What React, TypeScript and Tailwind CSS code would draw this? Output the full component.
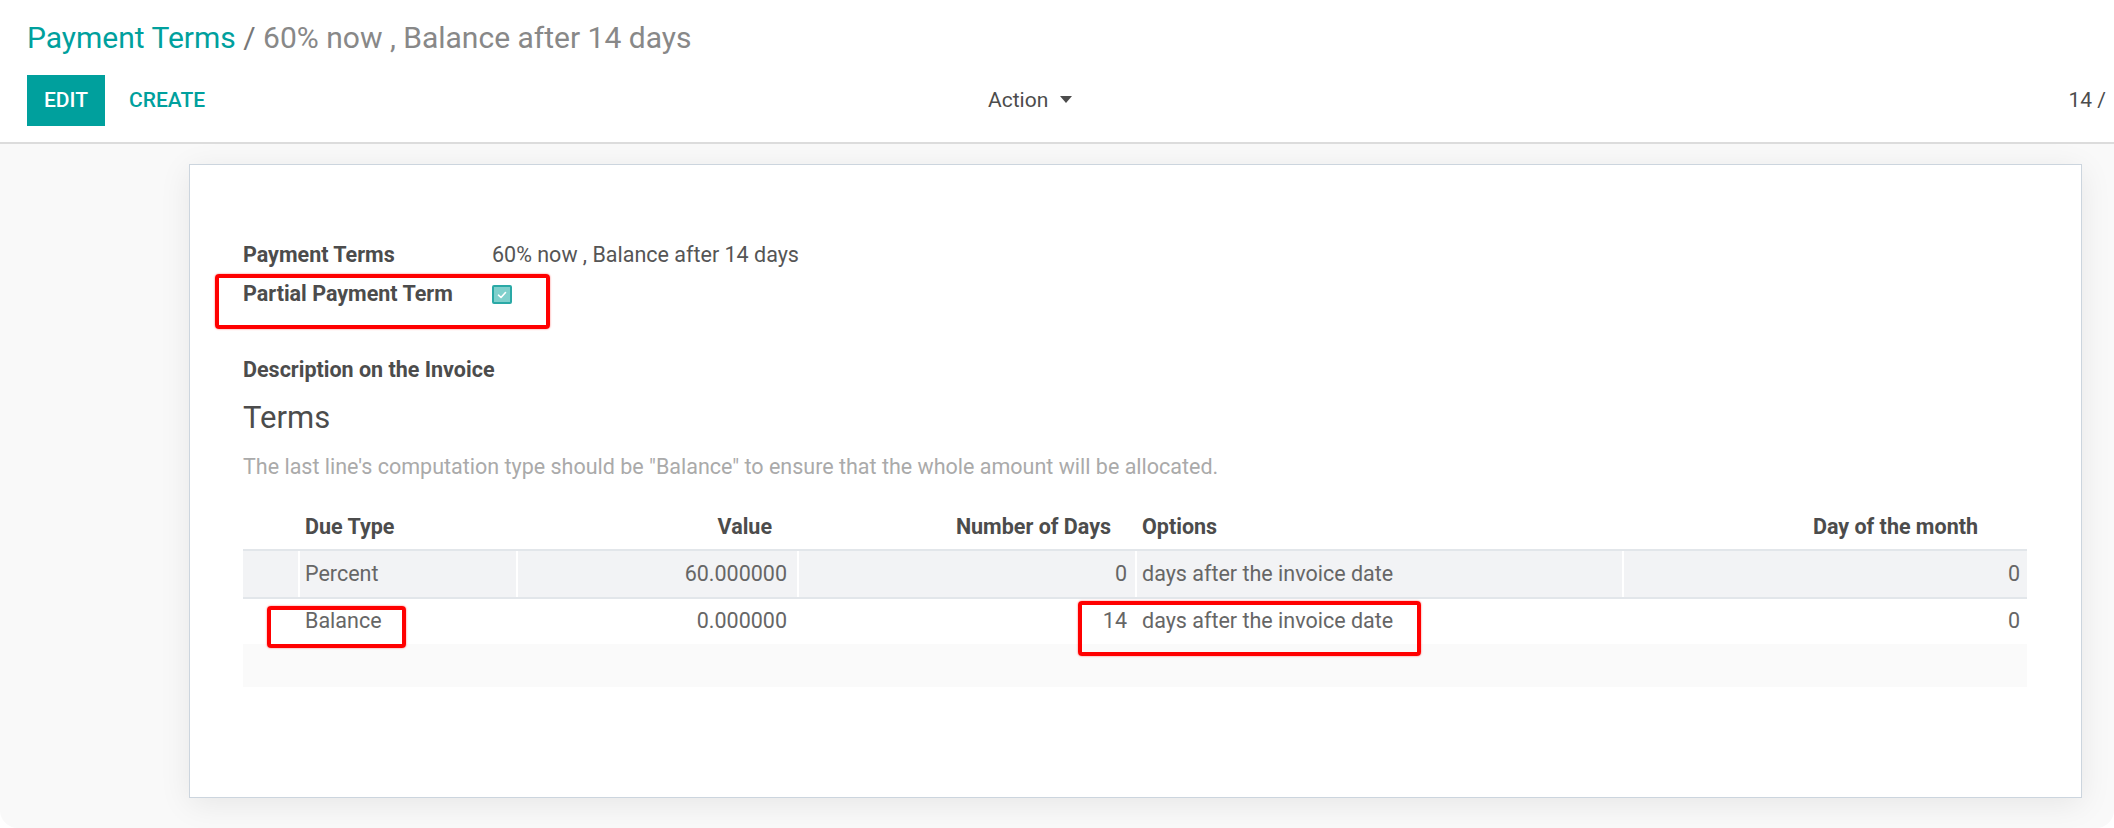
import React from "react";

const cols = "grid grid-cols-[55px_218px_281px_338px_487px_405px]";

function Check() {
  return (
    <div className="w-[20px] h-[19px] rounded-[2px] border-2 border-[#2aa9a6] bg-[#7fd0cc] flex items-center justify-center">
      <svg width="10" height="8" viewBox="0 0 10 8" fill="none">
        <path d="M1.5 4.2 L4 6.5 L8.5 1.5" stroke="white" strokeWidth="1.6" strokeLinecap="round" strokeLinejoin="round" />
      </svg>
    </div>
  );
}

function RedBox({ className }: { className: string }) {
  return (
    <div
      className={
        "absolute border-[4px] border-[#ff0000] rounded-[4px] shadow-[0_0_2px_rgba(255,0,0,0.6)] pointer-events-none " +
        className
      }
    />
  );
}

export default function App() {
  return (
    <div className="w-[2114px] h-[828px] bg-white overflow-hidden font-['Roboto',sans-serif]">
      <div className="h-[828px] rounded-b-[18px] bg-[#f9f9f9] overflow-hidden flex flex-col">
        {/* Control panel */}
        <div className="h-[144px] bg-white border-b-2 border-[#dcdcdc] pl-[27px] shrink-0">
          <div className="pt-[18px] text-[30px] leading-[40px] whitespace-nowrap">
            <span className="text-[#00a09d]">Payment Terms</span>
            <span className="text-[#777777]"> / </span>
            <span className="text-[#888888]">60% now , Balance after 14 days</span>
          </div>
          <div className="mt-[17px] h-[51px] flex items-center">
            <div className="w-[961px] flex items-center">
              <div className="w-[78px] h-[51px] bg-[#00a09d] text-white font-medium text-[21px] flex items-center justify-center">
                EDIT
              </div>
              <div className="ml-[24px] text-[#00a09d] font-medium text-[21px]">CREATE</div>
            </div>
            <div className="flex items-center gap-[12px] text-[#4c4c4c] text-[21px]">
              <span>Action</span>
              <svg width="12" height="7" viewBox="0 0 12 7" className="mt-[-2px]">
                <path d="M0 0 L12 0 L6 7 Z" fill="#4c4c4c" />
              </svg>
            </div>
            <div className="ml-auto pr-[8px] whitespace-nowrap text-[21px] text-[#4c4c4c]">14 /</div>
          </div>
        </div>

        {/* Sheet */}
        <div className="mt-[20px] ml-[189px] w-[1893px] h-[634px] bg-white border border-[#ccd5de] shadow-[0_6px_30px_rgba(0,0,0,0.08)] relative shrink-0">
          <div className="px-[53px] pt-[71px] text-[21.5px] text-[#666666]">
            <div className="h-[39px] flex items-center">
              <div className="w-[249px] font-bold text-[#4c4c4c]">Payment Terms</div>
              <div className="text-[#555555]">60% now , Balance after 14 days</div>
            </div>
            <div className="h-[39px] flex items-center">
              <div className="w-[249px] font-bold text-[#4c4c4c]">Partial Payment Term</div>
              <Check />
            </div>
            <div className="mt-[37px] h-[39px] flex items-center font-bold text-[#4c4c4c]">
              Description on the Invoice
            </div>
            <div className="mt-[9px] text-[31px] leading-[38px] text-[#4c4c4c]">Terms</div>
            <div className="mt-[14px] leading-[32px] text-[#aaaaaa]">
              The last line's computation type should be "Balance" to ensure that the whole amount will be allocated.
            </div>

            {/* Table */}
            <div className="mt-[22px] w-[1784px]">
              <div className={cols + " h-[46px] items-center border-b-2 border-[#e2e6ea] font-bold text-[#4c4c4c]"}>
                <div />
                <div className="pl-[7px]">Due Type</div>
                <div className="pr-[25px] text-right">Value</div>
                <div className="pr-[24px] text-right">Number of Days</div>
                <div className="pl-[7px]">Options</div>
                <div className="pr-[49px] text-right">Day of the month</div>
              </div>
              <div className={cols + " h-[48px] bg-[#f2f3f5] border-b-2 border-[#e2e6ea]"}>
                <div />
                <div className="border-l-2 border-white pl-[5px] flex items-center">Percent</div>
                <div className="border-l-2 border-white pr-[10px] flex items-center justify-end">60.000000</div>
                <div className="border-l-2 border-white pr-[8px] flex items-center justify-end">0</div>
                <div className="border-l-2 border-white pl-[5px] flex items-center">days after the invoice date</div>
                <div className="border-l-2 border-white pr-[7px] flex items-center justify-end">0</div>
              </div>
              <div className={cols + " h-[45px] bg-white"}>
                <div />
                <div className="pl-[7px] flex items-center">Balance</div>
                <div className="pr-[10px] flex items-center justify-end">0.000000</div>
                <div className="pr-[8px] flex items-center justify-end">14</div>
                <div className="pl-[7px] flex items-center">days after the invoice date</div>
                <div className="pr-[7px] flex items-center justify-end">0</div>
              </div>
              <div className="h-[43px] bg-[#fafafa]" />
            </div>
          </div>

          <RedBox className="left-[25px] top-[109px] w-[335px] h-[55px]" />
          <RedBox className="left-[77px] top-[441px] w-[139px] h-[42px]" />
          <RedBox className="left-[888px] top-[436px] w-[343px] h-[55px]" />
        </div>
      </div>
    </div>
  );
}
